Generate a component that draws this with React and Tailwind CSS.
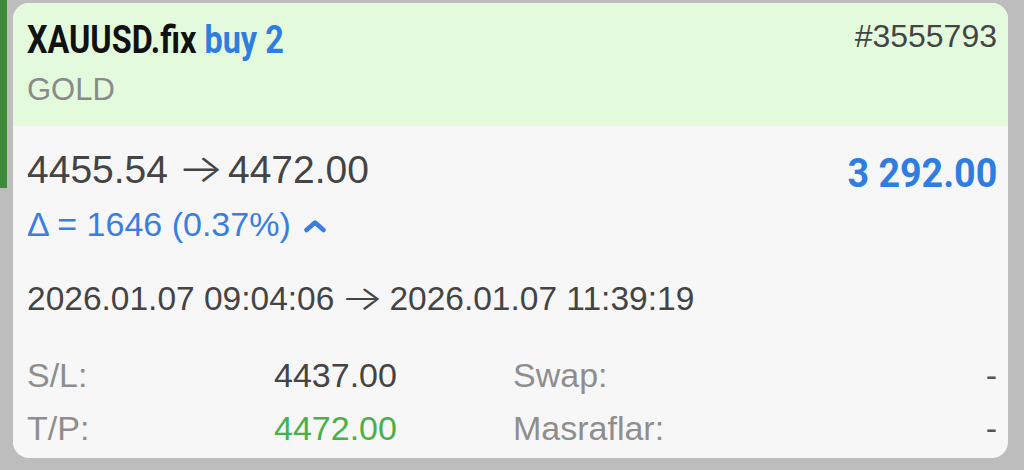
import React from "react";

const cond = { fontFamily: '"Roboto", "Liberation Sans", sans-serif' };
const arrowFont = { fontFamily: '"Inter", "DejaVu Sans", sans-serif' };

function Arrow({ className }) {
  return (
    <span className={`inline-block text-center font-light ${className}`} style={arrowFont}>
      →
    </span>
  );
}

function Row({ label, value, valueClass, label2, value2, className }) {
  return (
    <div className={`flex items-center text-[34px] leading-[40px] ${className || ""}`}>
      <span className="w-[247px] text-[#8e8e8e]">{label}</span>
      <span className={`w-[239px] ${valueClass}`}>{value}</span>
      <span className="flex-1 text-[#8e8e8e]">{label2}</span>
      <span className="text-[#555]">{value2}</span>
    </div>
  );
}

export default function App() {
  return (
    <div
      className="flex w-[1024px] h-[470px] overflow-hidden bg-[#bdbdbd]"
      style={{ fontFamily: '"Liberation Sans", Arial, sans-serif' }}
    >
      <div className="w-[7px] h-[188px] shrink-0 bg-[#3d8a3a]" />
      <div className="ml-[6px] mt-[3px] w-[995px] h-[455px] rounded-[16px] overflow-hidden bg-[#f7f7f7] flex flex-col">
        <div className="bg-[#e3fbdc] h-[123px] pl-[14px] pr-[11px] pt-[14px]">
          <div className="flex items-start justify-between">
            <div
              className="inline-block origin-left scale-x-[0.83] text-[39px] leading-[46px] font-bold whitespace-nowrap"
              style={cond}
            >
              <span className="text-[#111]">XAUUSD.fix</span>{" "}
              <span className="text-[#2f7de1]">buy 2</span>
            </div>
            <div className="text-[32px] leading-[34px] text-[#444] mt-[2px]">#3555793</div>
          </div>
          <div className="mt-[10px] text-[31px] leading-[34px] text-[#8a8a8a]">GOLD</div>
        </div>

        <div className="pl-[14px] pr-[11px] pt-[21px]">
          <div className="flex items-start justify-between">
            <div className="text-[39px] leading-[44px] text-[#444] whitespace-nowrap">
              4455.54
              <Arrow className="w-[36px] ml-[14px] mr-[10px] scale-x-[1.25] -translate-y-[1px]" />
              4472.00
            </div>
            <div
              className="inline-block origin-right scale-x-[0.94] text-[40px] leading-[44px] font-bold text-[#2f7de1] mt-[5px] whitespace-nowrap"
              style={cond}
            >
              3 292.00
            </div>
          </div>
          <div className="mt-[10px] flex items-center text-[34px] leading-[36px] text-[#3a7fe0]">
            <span>Δ = 1646 (0.37%)</span>
            <svg className="ml-[12px] mt-[4px]" width="24" height="14" viewBox="0 0 24 14" fill="none">
              <path d="M3.5 11 L12 3.5 L20.5 11" stroke="#3a7fe0" strokeWidth="4.5" strokeLinecap="round" strokeLinejoin="round" />
            </svg>
          </div>
          <div className="mt-[38px] text-[33.5px] leading-[36px] text-[#444] whitespace-nowrap">
            2026.01.07 09:04:06
            <Arrow className="w-[31px] mx-[12px] scale-x-[1.35]" />
            2026.01.07 11:39:19
          </div>
          <Row
            className="mt-[38px]"
            label="S/L:"
            value="4437.00"
            valueClass="text-[#444]"
            label2="Swap:"
            value2="-"
          />
          <Row
            className="mt-[13px]"
            label="T/P:"
            value="4472.00"
            valueClass="text-[#49b04a]"
            label2="Masraflar:"
            value2="-"
          />
        </div>
      </div>
    </div>
  );
}
